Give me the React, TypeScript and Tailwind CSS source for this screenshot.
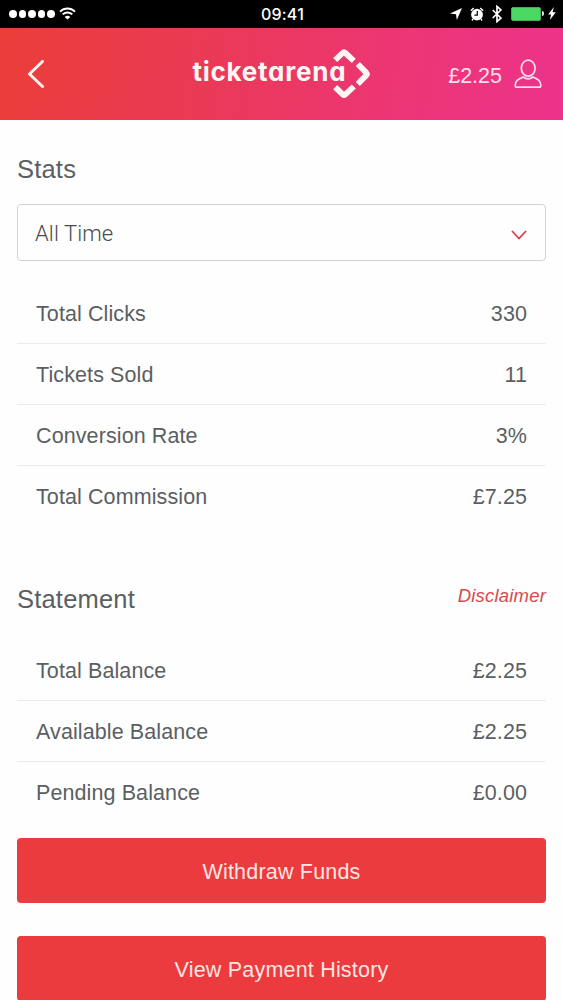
type Row = { label: string; value: string }

const STATS: Row[] = [
  { label: "Total Clicks", value: "330" },
  { label: "Tickets Sold", value: "11" },
  { label: "Conversion Rate", value: "3%" },
  { label: "Total Commission", value: "£7.25" },
]

const STATEMENT: Row[] = [
  { label: "Total Balance", value: "£2.25" },
  { label: "Available Balance", value: "£2.25" },
  { label: "Pending Balance", value: "£0.00" },
]

function StatusBar() {
  return (
    <div className="grid h-[27.5px] grid-cols-[1fr_auto_1fr] items-center bg-black pl-[9px] pr-[7px] text-white">
      <div className="flex items-center gap-1">
        <div className="flex gap-[2px]">
          {[0, 1, 2, 3, 4].map((n) => (
            <span key={n} className="h-[7.6px] w-[7.6px] rounded-full bg-white" />
          ))}
        </div>
        <svg width="17" height="13" viewBox="0 0 17 13" fill="none" stroke="currentColor" strokeWidth="1.9">
          <path d="M1 4.6C5.2.5 11.8.5 16 4.6" />
          <path d="M3.7 7.4c2.7-2.6 6.9-2.6 9.6 0" />
          <path d="M8.5 12.6 5.7 9.9c1.5-1.4 4.1-1.4 5.6 0z" fill="currentColor" stroke="none" />
        </svg>
      </div>
      <span className="pt-px font-['Inter'] text-[16px] font-medium leading-none tracking-[0.2px]">09:41</span>
      <div className="flex items-center justify-end">
        <svg width="12" height="12" viewBox="0 0 12 12" fill="currentColor">
          <path d="M12 0 6.8 12 6 6.3 0 5.4z" />
        </svg>
        <svg className="ml-[8px]" width="14" height="14" viewBox="0 0 14 14">
          <circle cx="7" cy="7.6" r="5.9" fill="currentColor" />
          <path d="M.8 3.8 3.7 1M13.2 3.8 10.3 1M3 12l-1 1.5M11 12l1 1.5" stroke="currentColor" strokeWidth="1.4" />
          <path d="M7.3 4v4.1H4.4" fill="none" stroke="#000" strokeWidth="1.2" />
        </svg>
        <svg className="ml-[8px]" width="10" height="18" viewBox="0 0 10 18" fill="none" stroke="currentColor" strokeWidth="1.7">
          <path d="m.7 5 8.2 8L5 16.6V1.4L8.900 5 .7 13" />
        </svg>
        <div className="ml-[9px] h-[13.5px] w-[30px] rounded-[2px] border border-[#3fae55] bg-[#4bd863]" />
        <span className="ml-px h-[5px] w-[2px] rounded-r-full bg-[#d8e8da]" />
        <svg className="ml-[4px]" width="8" height="13" viewBox="0 0 8 13" fill="currentColor">
          <path d="M5.8 0 .2 7.4h2.9L1.9 13l5.9-7.8H4.7z" />
        </svg>
      </div>
    </div>
  )
}

function Logo() {
  return (
    <div className="flex items-center pr-[6px] text-[#fff6f4]">
      <span className="-mt-[3px] w-[155px] whitespace-nowrap font-['Inter'] text-[26px] font-bold leading-none tracking-[0.75px] [font-feature-settings:'cv11']">
        ticketarena
      </span>
      <svg className="-ml-4" width="39" height="52" viewBox="0 0 39 52" fill="none" stroke="currentColor" strokeWidth="5.8">
        <path d="m3.2 12 7.4-7q1.4-1.3 2.8 0l8.4 7.8" />
        <path d="m25.8 16 8.400 8.600q1.300 1.400 0 2.800l-8.400 8.600" />
        <path d="m3.200 39.200 7.400 7.200q1.400 1.300 2.800 0l8.400-7.900" />
      </svg>
    </div>
  )
}

function Header() {
  return (
    <header className="grid h-[92px] grid-cols-[1fr_auto_1fr] items-center bg-[linear-gradient(100deg,#eb3e39_0%,#ea3a55_35%,#ec3671_66%,#ec328b_100%)] pl-[27px] pr-[21px] text-[#fff3f0]">
      <svg width="18" height="28" viewBox="0 0 18 28" fill="none" stroke="currentColor" strokeWidth="3" strokeLinecap="round" strokeLinejoin="round">
        <path d="M15.5 1.500 2.500 14l13 12.500" />
      </svg>
      <Logo />
      <div className="flex items-center justify-end gap-3">
        <span className="pt-[6px] text-[21.5px] leading-none text-[#fde0ea]">£2.25</span>
        <svg width="28" height="30" viewBox="0 0 28 30" fill="none" stroke="#fde0ea" strokeWidth="1.7" strokeLinejoin="round">
          <ellipse cx="14.2" cy="9.2" rx="6.9" ry="8" />
          <path d="M9.2 18C4.5 20 1.2 21.5 1.2 26.5c0 1.200.4 1.700 1.600 1.700h22.400c1.200 0 1.600-.5 1.600-1.700 0-5-3.200-6.500-7.800-8.500-3 2.200-6.800 2.200-9.800 0z" />
        </svg>
      </div>
    </header>
  )
}

function Rows({ rows }: { rows: Row[] }) {
  return (
    <dl className="divide-y divide-[#ececee]">
      {rows.map((row) => (
        <div key={row.label} className="flex h-[61px] items-center justify-between px-[19px] pt-[2px] text-[21.5px] tracking-[0.1px]">
          <dt>{row.label}</dt>
          <dd>{row.value}</dd>
        </div>
      ))}
    </dl>
  )
}

export default function App() {
  return (
    <div className="h-[1000px] w-[563px] overflow-hidden bg-[#fefefe] font-['Liberation_Sans',sans-serif] text-[#5b5f62]">
      <StatusBar />
      <Header />

      <main className="px-[17px]">
        <section className="pt-[31.5px]">
          <h2 className="text-[25.5px] leading-9 tracking-[0.2px]">Stats</h2>
          <button className="mt-[17px] mb-[22px] flex h-[57px] w-full items-center justify-between rounded-[4px] border border-[#d5d2d4] pl-[17px] pr-[18px] pt-px font-['Roboto'] text-[22px] font-light tracking-[0.1px] text-[#484c4f]">
            All Time
            <svg className="mt-[4px]" width="16" height="10" viewBox="0 0 16 10" fill="none" stroke="#cf4145" strokeWidth="1.8">
              <path d="m1 1 7 7.500L15 1" />
            </svg>
          </button>
          <Rows rows={STATS} />
        </section>

        <section className="pt-[54px]">
          <div className="flex items-start justify-between">
            <h2 className="text-[25.5px] leading-9 tracking-[0.2px]">Statement</h2>
            <a className="pt-px text-[18.5px] italic leading-7 tracking-[0.2px] text-[#d9484b]">Disclaimer</a>
          </div>
          <div className="pt-[23px]">
            <Rows rows={STATEMENT} />
          </div>
        </section>

        <div className="flex flex-col gap-[33px] pt-[15px] text-[21.5px] tracking-[0.2px] text-[#ffe6e2]">
          <button className="h-[65px] rounded-[4px] bg-[#eb3b3e] pt-[3px]">Withdraw Funds</button>
          <button className="h-[65px] rounded-[4px] bg-[#eb3b3e] pt-[3px]">View Payment History</button>
        </div>
      </main>
    </div>
  )
}
